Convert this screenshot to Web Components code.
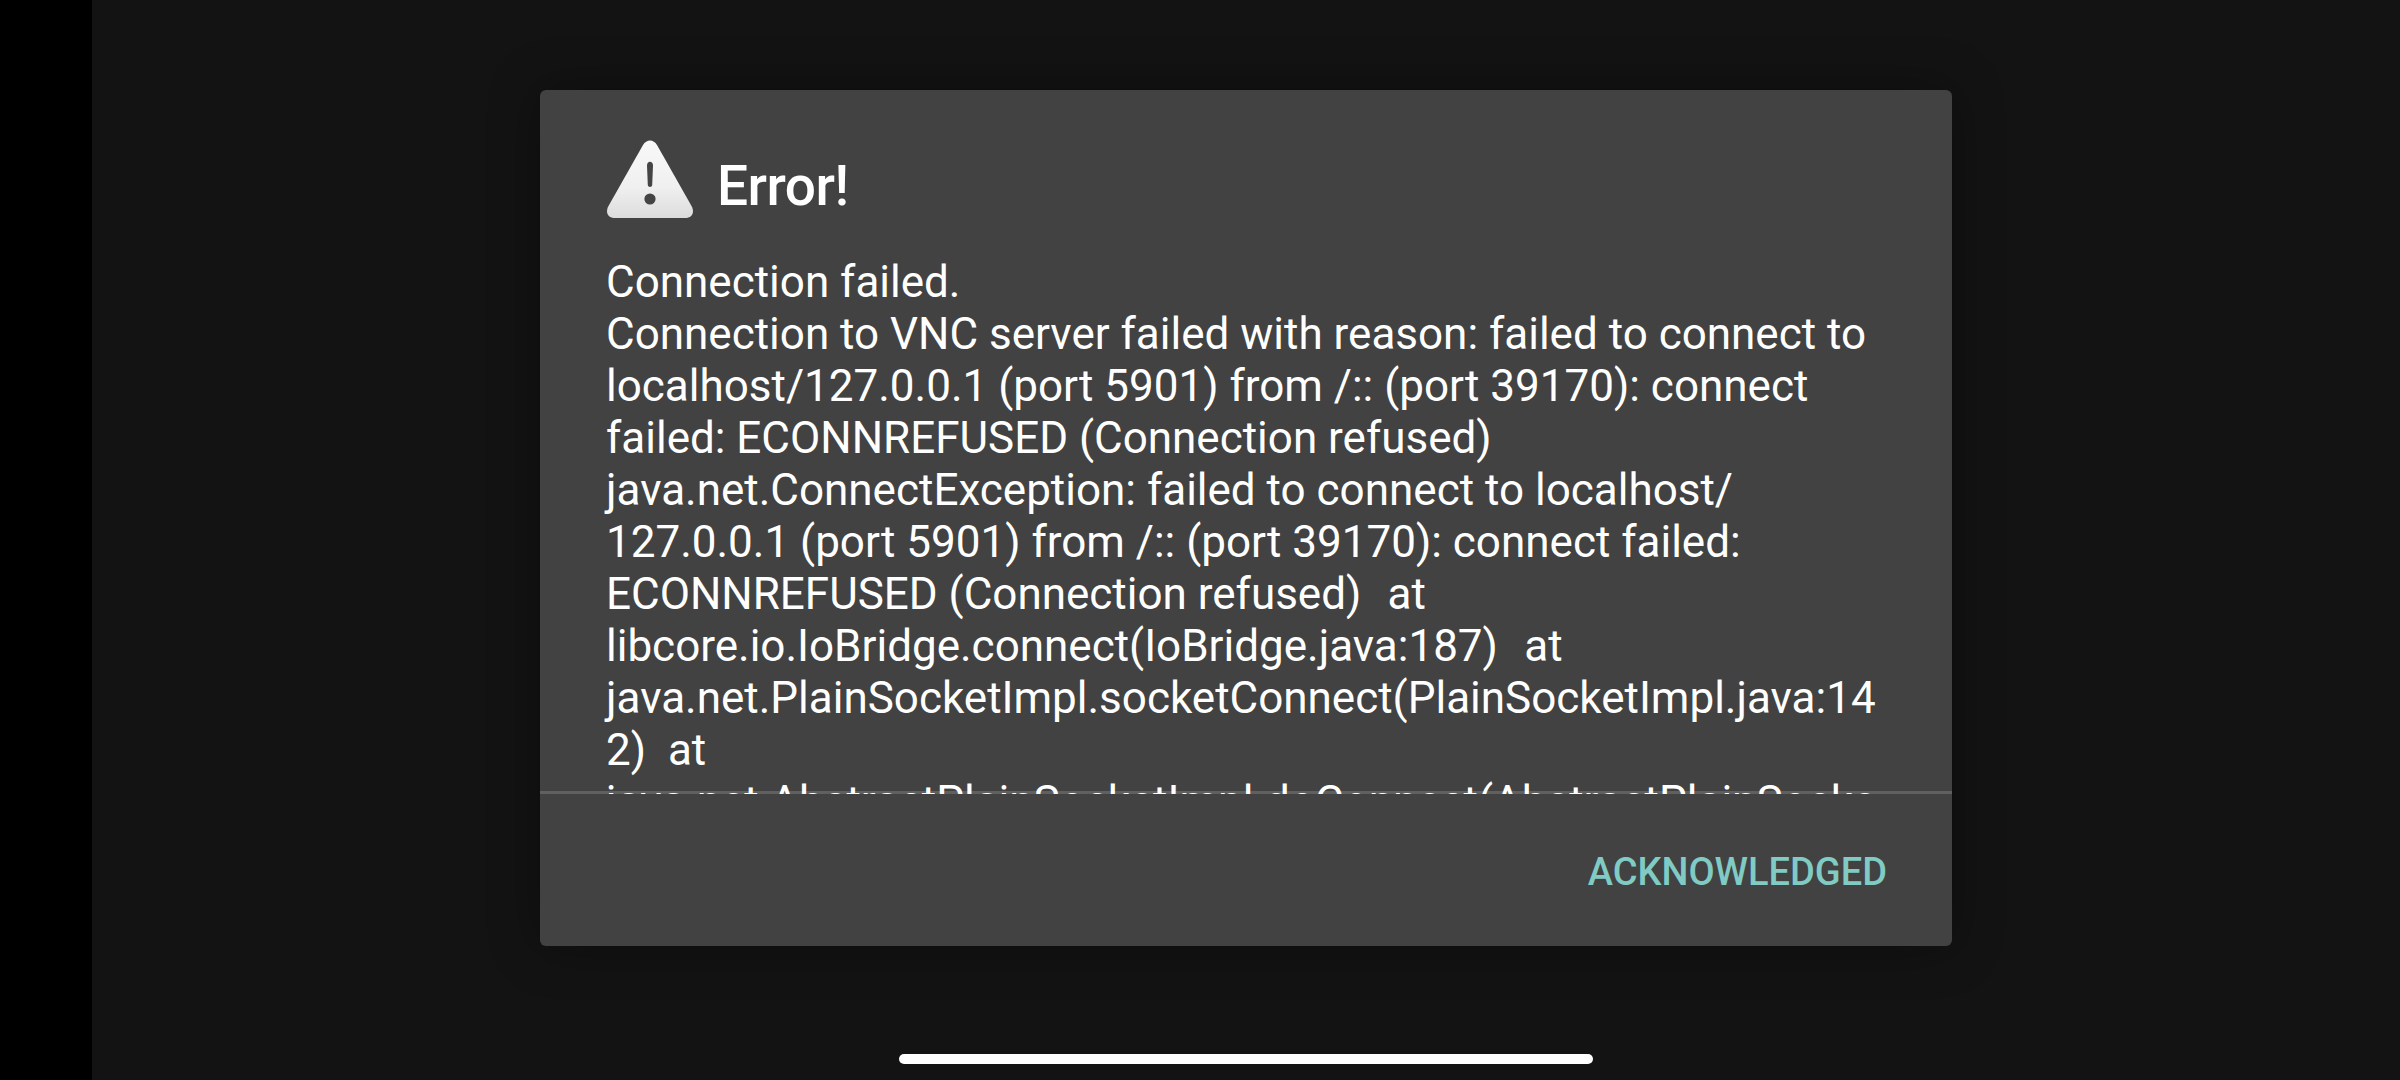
<!DOCTYPE html>
<html>
<head>
<meta charset="utf-8">
<title>Error</title>
<style>
html, body { margin: 0; padding: 0; height: 100%; background: #000; }
body { font-family: Roboto, "Liberation Sans", sans-serif; overflow: hidden; }
</style>
</head>
<body>
<app-screen>
    <alert-dialog heading="Error!" action="ACKNOWLEDGED">Connection failed.
Connection to VNC server failed with reason: failed to connect to
localhost/127.0.0.1 (port 5901) from /:: (port 39170): connect
failed: ECONNREFUSED (Connection refused)
java.net.ConnectException: failed to connect to localhost/
127.0.0.1 (port 5901) from /:: (port 39170): connect failed:
ECONNREFUSED (Connection refused)&#160;&#8202; at
libcore.io.IoBridge.connect(IoBridge.java:187)&#160;&#8202; at
java.net.PlainSocketImpl.socketConnect(PlainSocketImpl.java:14
2)&#160; at
java.net.AbstractPlainSocketImpl.doConnect(AbstractPlainSocke</alert-dialog>
</app-screen>
<script>
class AppScreen extends HTMLElement {
    constructor() {
        super();
        this.attachShadow({ mode: 'open' });
        this.shadowRoot.innerHTML = `
            <style>
                :host {
                    display: flex;
                    width: 2400px;
                    height: 1080px;
                    background: #000;
                }
                .cutout { width: 92px; flex: none; }
                .main {
                    position: relative;
                    flex: 1;
                    display: flex;
                    justify-content: center;
                    padding-top: 90px;
                    background: #131313;
                }
                .home {
                    position: absolute;
                    left: 807px;
                    top: 1054px;
                    width: 694px;
                    height: 10px;
                    border-radius: 5px;
                    background: #fff;
                }
            </style>
            <div class="cutout"></div>
            <div class="main">
                <slot></slot>
                <div class="home"></div>
            </div>
        `;
    }
}

class WarningIcon extends HTMLElement {
    constructor() {
        super();
        this.attachShadow({ mode: 'open' });
        this.shadowRoot.innerHTML = `
            <style>
                :host { display: block; width: 88px; height: 80px; flex: none; }
                svg { display: block; }
            </style>
            <svg width="88" height="80" viewBox="0 0 88 80">
                <defs>
                    <linearGradient id="g" x1="0" y1="0" x2="0" y2="1">
                        <stop offset="0" stop-color="#f8f8f8"/>
                        <stop offset="0.6" stop-color="#f0f0f0"/>
                        <stop offset="1" stop-color="#dcdcdc"/>
                    </linearGradient>
                </defs>
                <path fill="url(#g)" d="M37 5 C40.5 -1 47.5 -1 51 5 L85.5 66 C89 72.5 86 78 79 78 L9 78 C2 78 -1 72.5 2.500 66 Z"/>
                <path fill="#444" d="M41 25.500 C41 20.500 47 20.500 47 25.500 L46.200 45 C46 47.500 42 47.500 41.800 45 Z"/>
                <circle cx="44" cy="59" r="5.600" fill="#444"/>
            </svg>
        `;
    }
}

class AlertDialog extends HTMLElement {
    constructor() {
        super();
        this.attachShadow({ mode: 'open' });
        this.shadowRoot.innerHTML = `
            <style>
                :host {
                    display: flex;
                    flex-direction: column;
                    width: 1412px;
                    height: 856px;
                    box-sizing: border-box;
                    background: #424242;
                    border-radius: 6px;
                    box-shadow: 0 0 50px rgba(0,0,0,.35);
                    color: #fff;
                }
                .title {
                    display: flex;
                    align-items: flex-start;
                    gap: 23px;
                    padding: 50px 66px 0;
                    height: 166px;
                    box-sizing: border-box;
                    flex: none;
                }
                h1 {
                    margin: 6px 0 0;
                    font: 500 55px/80px Roboto, sans-serif;
                    letter-spacing: -0.5px;
                }
                .message {
                    height: 538px;
                    flex: none;
                    overflow: hidden;
                    padding: 0 66px;
                    font: 400 44px/52px Roboto, sans-serif;
                    white-space: pre;
                }
                .actions {
                    flex: none;
                    height: 155px;
                    margin-top: -3px;
                    box-sizing: border-box;
                    border-top: 3px solid rgba(255,255,255,.16);
                    display: flex;
                    justify-content: flex-end;
                    align-items: center;
                    padding: 3px 65px 0 0;
                }
                button {
                    background: none;
                    border: 0;
                    padding: 0;
                    color: #80cbc4;
                    font: 500 38px/44px Roboto, sans-serif;
                    cursor: pointer;
                }
            </style>
            <div class="title">
                <warning-icon></warning-icon>
                <h1></h1>
            </div>
            <div class="message"><slot></slot></div>
            <div class="actions"><button></button></div>
        `;
        this.shadowRoot.querySelector('h1').textContent = this.getAttribute('heading');
        this.shadowRoot.querySelector('button').textContent = this.getAttribute('action');
    }
}

customElements.define('warning-icon', WarningIcon);
customElements.define('alert-dialog', AlertDialog);
customElements.define('app-screen', AppScreen);
</script>
</body>
</html>
